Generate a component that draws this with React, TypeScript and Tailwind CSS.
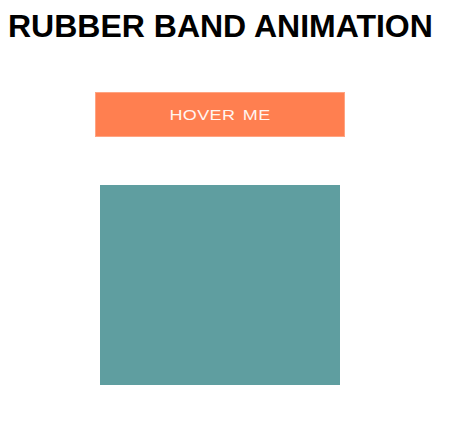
export default function App() {
  return (
    <div className="min-h-[427px] bg-white px-2 pt-2 font-['Liberation_Sans',Arial,sans-serif]">
      <h1 className="text-[32px] font-bold leading-[37px] text-black">RUBBER BAND ANIMATION</h1>
      <div className="flex w-[424px] flex-col items-center">
        <button className="mt-[47px] flex h-[45px] w-[250px] items-center justify-center border border-[#ffa482] bg-[#ff7f50] text-[18px] uppercase text-[#fff5f0]">
          <span className="inline-block translate-y-[1px] scale-y-[0.8] tracking-[0.4px] [word-spacing:2px]">Hover me</span>
        </button>
        <div className="mt-[48px] h-[200px] w-[240px] bg-[#5f9ea0]" />
      </div>
    </div>
  );
}
